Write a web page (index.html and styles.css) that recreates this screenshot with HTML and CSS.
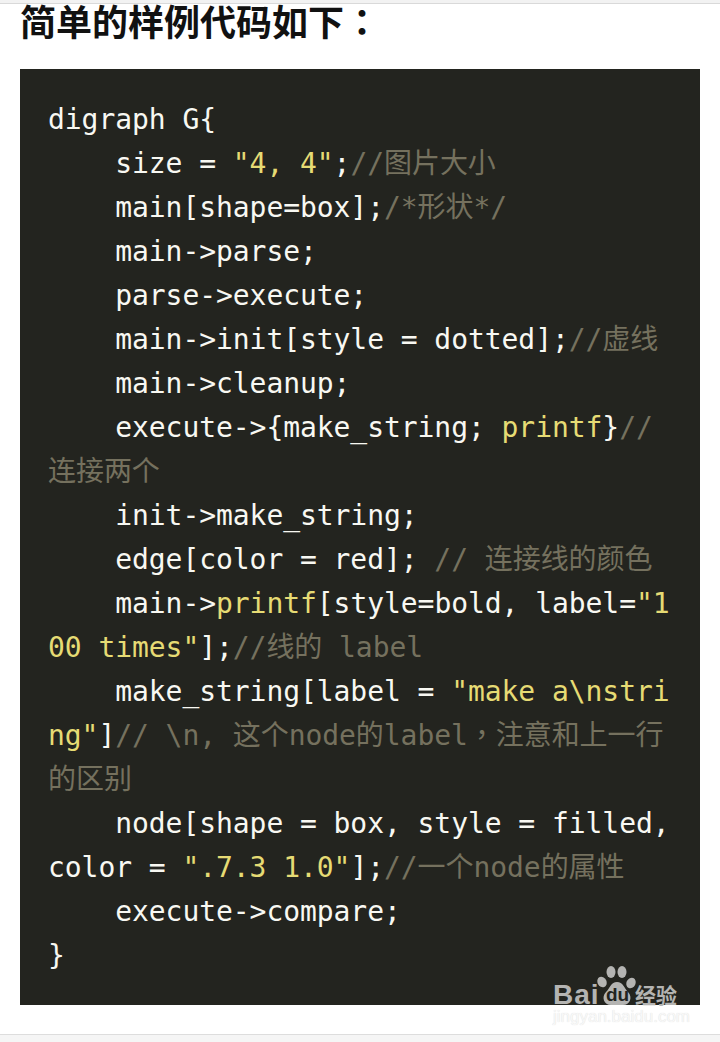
FILE: index.html
```html
<!DOCTYPE html>
<html lang="zh">
<head>
<meta charset="utf-8">
<title>sample</title>
<link rel="stylesheet" href="styles.css">
</head>
<body>
<div class="top"></div>
<main class="page">
<h2 class="heading">简单的样例代码如下<span class="p" lang="zh-Hant">：</span></h2>
<div class="code-wrap">
<pre class="code">digraph G{
    size = <span class="s">"4, 4"</span>;<span class="c">//图片大小</span>
    main[shape=box];<span class="c">/*形状*/</span>
    main-&gt;parse;
    parse-&gt;execute;
    main-&gt;init[style = dotted];<span class="c">//虚线</span>
    main-&gt;cleanup;
    execute-&gt;{make_string; <span class="s">printf</span>}<span class="c">//连接两个</span>
    init-&gt;make_string;
    edge[color = red]; <span class="c">// 连接线的颜色</span>
    main-&gt;<span class="s">printf</span>[style=bold, label=<span class="s">"100 times"</span>];<span class="c">//线的 label</span>
    make_string[label = <span class="s">"make a\nstring"</span>]<span class="c">// \n, 这个node的label<span class="p" lang="zh-Hant">，</span>注意和上一行的区别</span>
    node[shape = box, style = filled, color = <span class="s">".7.3 1.0"</span>];<span class="c">//一个node的属性</span>
    execute-&gt;compare;
}</pre>
<div class="mark">
<svg class="paw" viewBox="0 0 40 40" width="40" height="40"><g fill="#b4b4b2"><ellipse cx="5" cy="17" rx="4.5" ry="5.5" transform="rotate(-25 5 17)"/><ellipse cx="14" cy="7" rx="4.5" ry="6"/><ellipse cx="25" cy="7" rx="4.5" ry="6"/><ellipse cx="34" cy="18" rx="4.5" ry="5.5" transform="rotate(25 34 18)"/><path d="M20 17c-6 0-7 6-11 10-5 5-2 13 5 13h12c7 0 10-8 5-13-4-4-5-10-11-10z"/></g></svg>
<span class="bai">Bai</span>
<span class="du">du</span>
<span class="jy">经验</span>
<span class="mark-url">jingyan.baidu.com</span>
</div>
</div>
</main>
<div class="foot"></div>
</body>
</html>
```
FILE: styles.css
```css
html, body { margin: 0; padding: 0; background: #fff; }
body { width: 720px; height: 1042px; overflow: hidden; position: relative; }
.top { height: 3px; background: #f2f2f2; border-bottom: 1px solid #d9d9d9; }
.page { padding: 0 20px; }
.heading { margin: 0; height: 65px; font: 700 36px/32px "Noto Sans CJK SC", sans-serif; color: #111; }
.p { font-family: "Noto Sans CJK TC", sans-serif; line-height: 0; }
.code-wrap { position: relative; background: #23241f; height: 936px; box-sizing: border-box; padding: 29px 28px 27px; }
.code { margin: 0; font: 28px/44px "DejaVu Sans Mono", "Noto Sans CJK SC", monospace; letter-spacing: -0.06px; color: #f8f8f2; white-space: pre-wrap; word-break: break-all; }
.s { color: #e6db74; }
.c { color: #75715e; }
.mark { position: absolute; left: 530px; top: 890px; width: 135px; height: 72px; font-family: "Liberation Sans", sans-serif; color: #b4b4b2; }
.paw { position: absolute; left: 47px; top: 6px; }
.bai { position: absolute; left: 3px; top: 20px; font-weight: 700; font-size: 28px; line-height: 32px; letter-spacing: 1px; }
.du { position: absolute; left: 56px; top: 26px; font-weight: 700; font-size: 19px; line-height: 20px; color: #23241f; }
.jy { position: absolute; left: 85px; top: 20px; font: 700 21px/30px "Noto Sans CJK SC", sans-serif; }
.mark-url { position: absolute; left: 3px; top: 48px; font-size: 17px; line-height: 20px; white-space: nowrap; color: #f8f8f8; text-shadow: 0 0 1px #d8d8d8; }
.foot { height: 7px; background: #f5f5f5; border-top: 1px solid #ddd; position: absolute; left: 0; right: 0; bottom: 0; }
```
